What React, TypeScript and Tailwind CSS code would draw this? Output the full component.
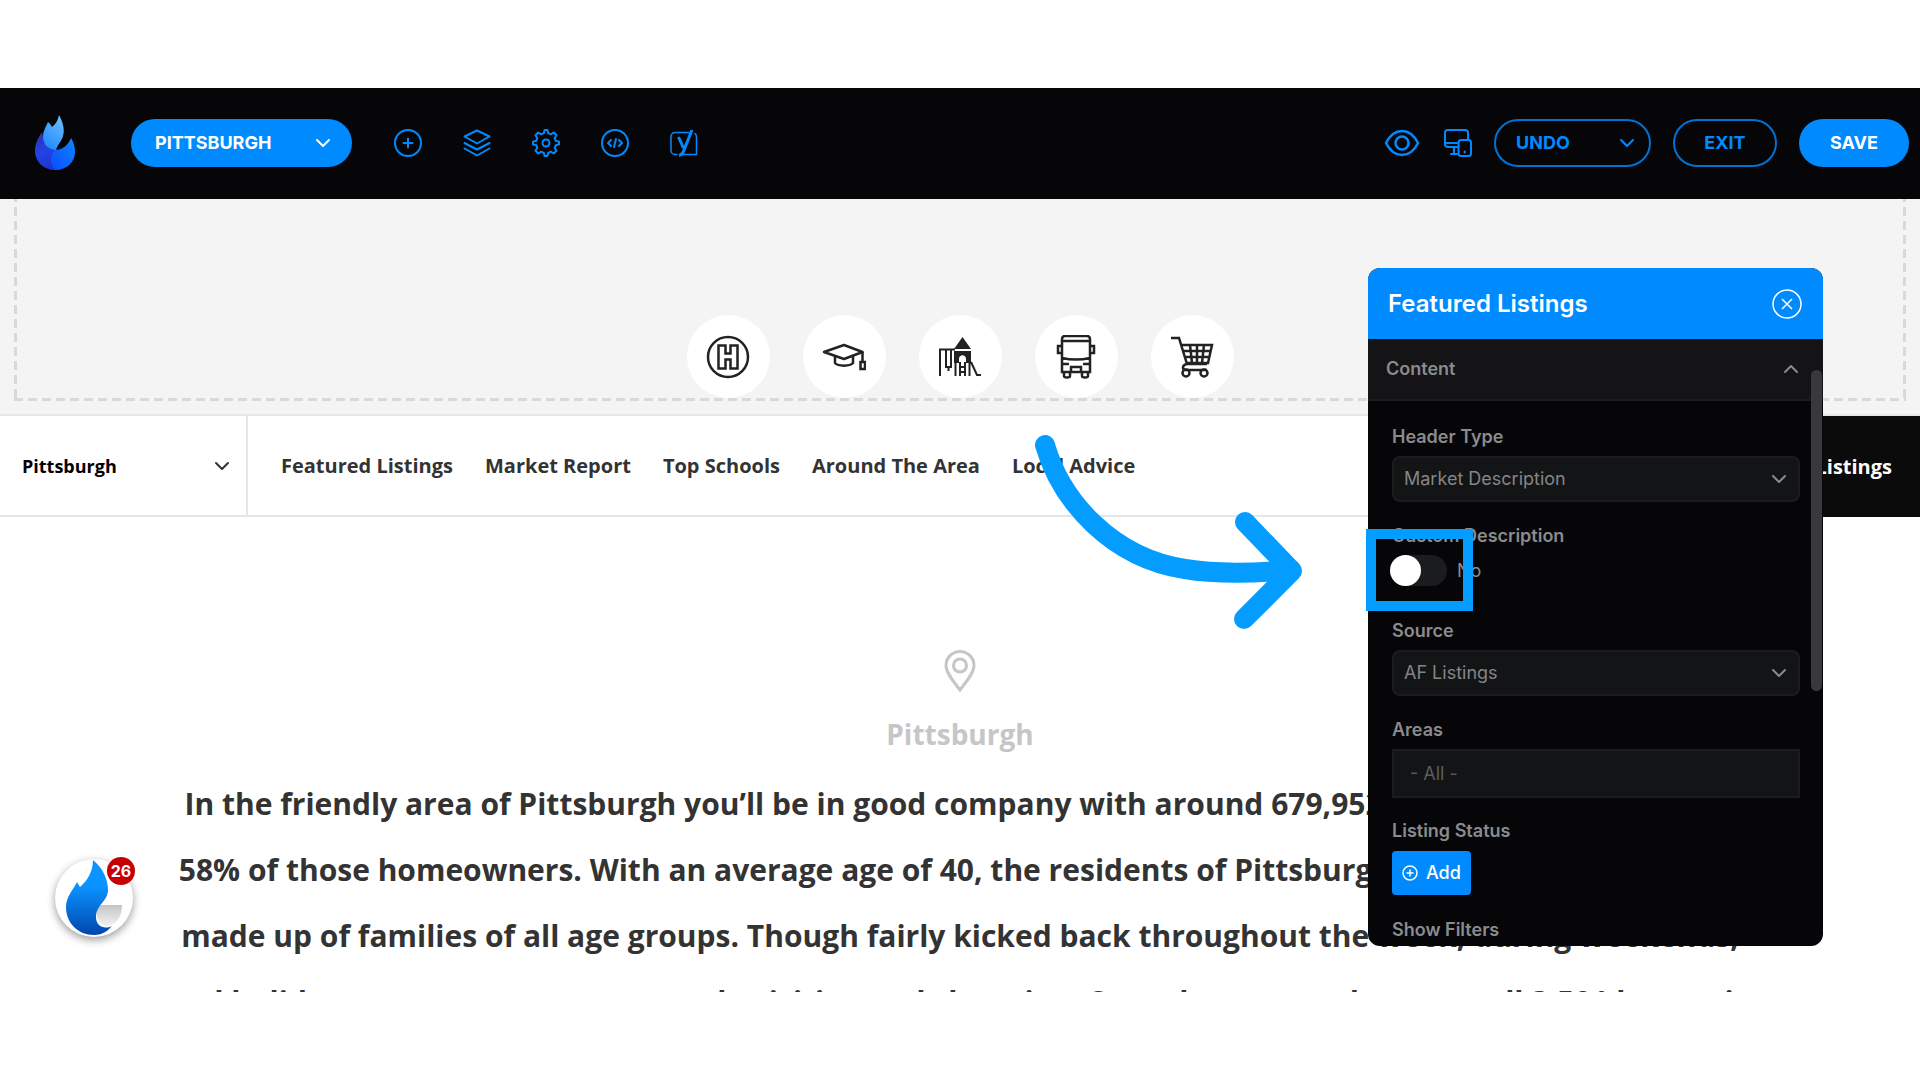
import { useState } from "react";
import type { ReactNode } from "react";

const NAV_LINKS = [
  "Featured Listings",
  "Market Report",
  "Top Schools",
  "Around The Area",
  "Local Advice",
];

const DESCRIPTION = [
  "In the friendly area of Pittsburgh you’ll be in good company with around 679,952 neighbors, and roughly",
  "58% of those homeowners. With an average age of 40, the residents of Pittsburgh are mostly well settled",
  "made up of families of all age groups. Though fairly kicked back throughout the week, during weekends,",
  "and holidays, you can see more people visiting and shopping. Come by any good season, all 3,501 homes in",
];

function Chevron({ className, up }: { className?: string; up?: boolean }) {
  return (
    <svg viewBox="0 0 16 10" fill="none" stroke="currentColor" strokeWidth="2" className={className}>
      <path d={up ? "M2 8l6-6 6 6" : "M2 2l6 6 6-6"} strokeLinecap="round" strokeLinejoin="round" />
    </svg>
  );
}

function FlameLogo() {
  return (
    <svg viewBox="0 0 40 56" className="h-14 w-10" aria-hidden="true">
      <defs>
        <linearGradient id="flameTop" x1="0.8" y1="0" x2="0.3" y2="1">
          <stop offset="0" stopColor="#6dbcff" />
          <stop offset="1" stopColor="#1f8bff" />
        </linearGradient>
        <linearGradient id="flameLeft" x1="0.2" y1="0" x2="0.5" y2="1">
          <stop offset="0" stopColor="#3a2fa8" />
          <stop offset="0.5" stopColor="#1f44e8" />
          <stop offset="1" stopColor="#2230c8" />
        </linearGradient>
        <linearGradient id="flameRight" x1="0" y1="1" x2="1" y2="0">
          <stop offset="0" stopColor="#0a4cff" />
          <stop offset="1" stopColor="#0f86ff" />
        </linearGradient>
      </defs>
      <path d="M7 17C3 23 0 29 0 36c0 11 9 19 20 19 6 0 10-2 13-6L21 34 9 28z" fill="url(#flameLeft)" />
      <path d="M36 23c3 5 4 9 4 14 0 10-8 18-20 18-6-6-5-17 1-20 8-1 12-5 15-12z" fill="url(#flameRight)" />
      <path d="M24 0c4 7 6 15 4 21-1 5-6 9-7 14C13 34 8 30 8 22c0-6 3-10 5-15 2 2 3 3 4 5 4-3 6-7 7-12z" fill="url(#flameTop)" />
    </svg>
  );
}

function ToolIcon({ label, children }: { label: string; children: ReactNode }) {
  return (
    <button type="button" aria-label={label} className="size-7 shrink-0">
      <svg viewBox="0 0 28 28" fill="none" stroke="currentColor" strokeWidth="2" strokeLinecap="round" strokeLinejoin="round" className="size-7">
        {children}
      </svg>
    </button>
  );
}

function TopBar() {
  return (
    <header className="flex h-[111px] items-center bg-[#060609] pr-[11px] pb-0.5 pl-[35px] font-['Inter',sans-serif] text-[#008aff]">
      <FlameLogo />
      <button type="button" className="ml-14 flex h-12 w-[221px] items-center justify-between rounded-full bg-[#008aff] pr-[21px] pl-6 text-lg font-bold text-white">
        PITTSBURGH
        <Chevron className="h-[10px] w-4" />
      </button>
      <nav aria-label="Editor tools" className="ml-[42px] flex items-center gap-[41px]">
        <ToolIcon label="Add">
          <circle cx="14" cy="14" r="13" />
          <path d="M14 9.500v9M9.500 14h9" />
        </ToolIcon>
        <ToolIcon label="Layers">
          <path d="M14 1.500l12.500 6L14 14.500l-12.500-7z" />
          <path d="M1.500 14L14 20.500 26.500 14M1.500 19.500L14 26.500l12.500-7" />
        </ToolIcon>
        <ToolIcon label="Settings">
          <circle cx="14" cy="14" r="3.500" />
          <path d="M11.800 4.200L12.600 1h2.800l.8 3.200 2.600 1.100 2.900-1.800 2.800 2.800-1.800 2.900 1.100 2.600 3.200.8v2.800l-3.200.8-1.100 2.600 1.800 2.900-2.800 2.800-2.900-1.800-2.600 1.100-.8 3.200h-2.800l-.8-3.200-2.600-1.100-2.900 1.800-2.800-2.800 1.800-2.900-1.100-2.600L1 15.400v-2.800l3.200-.8 1.100-2.600-1.800-2.900 2.800-2.800 2.900 1.800z" />
        </ToolIcon>
        <ToolIcon label="Code">
          <circle cx="14" cy="14" r="13" />
          <path d="M10 11l-3 3 3 3M18 11l3 3-3 3M15 10l-2 8" />
        </ToolIcon>
        <ToolIcon label="SEO">
          <path d="M19 3.500H5a4 4 0 0 0-4 4v14a4 4 0 0 0 4 4h2M25 4.500c1 1 1.500 2 1.500 3.500v17.500H13" strokeWidth="1.500" />
          <path d="M8.500 8l5 11M22 1l-8 20c-1 3-2.500 5-5 5.500" strokeWidth="3" strokeLinecap="butt" />
        </ToolIcon>
      </nav>
      <div className="ml-auto flex items-center">
        <button type="button" aria-label="Preview">
          <svg viewBox="0 0 36 28" fill="none" stroke="currentColor" strokeWidth="2.500" className="h-7 w-9">
            <path d="M2 14C6 6 11.500 2 18 2s12 4 16 12c-4 8-9.500 12-16 12S6 22 2 14z" strokeLinejoin="round" />
            <circle cx="18" cy="14" r="6.500" />
          </svg>
        </button>
        <button type="button" aria-label="Responsive view" className="ml-6">
          <svg viewBox="0 0 28 28" fill="none" stroke="currentColor" strokeWidth="2" strokeLinecap="round" strokeLinejoin="round" className="size-7">
            <path d="M13 18H4a3 3 0 0 1-3-3V4a3 3 0 0 1 3-3h17a3 3 0 0 1 3 3v6M1 14h12M10 18v6M7 25h6" />
            <rect x="14.500" y="11" width="12.500" height="16" rx="2.500" />
            <path d="M20.700 22.500v1" />
          </svg>
        </button>
        <button type="button" className="ml-[22px] flex h-12 w-[157px] items-center justify-between rounded-full border-2 border-[#0072d4] px-5 text-lg font-bold">
          UNDO
          <Chevron className="mr-[-6px] h-[10px] w-4" />
        </button>
        <button type="button" className="ml-[22px] h-12 w-[104px] rounded-full border-2 border-[#0072d4] text-lg font-bold">
          EXIT
        </button>
        <button type="button" className="ml-[22px] h-12 w-[110px] rounded-full bg-[#008aff] text-lg font-bold text-white">
          SAVE
        </button>
      </div>
    </header>
  );
}

function PlaceIcon({ label, children }: { label: string; children: ReactNode }) {
  return (
    <button type="button" aria-label={label} className="grid size-[83px] place-items-center rounded-full bg-white text-[#222]">
      <svg viewBox="0 0 44 44" fill="none" stroke="currentColor" strokeWidth="2.500" className="size-11">
        {children}
      </svg>
    </button>
  );
}

function PlacesStrip() {
  return (
    <section className="bg-[#f4f4f4] px-3.5 pb-[13px]">
      <div className="flex">
        <div className="w-[3px] bg-[repeating-linear-gradient(0deg,#d9d9d9_0_9px,transparent_9px_14px)]" />
        <div className="flex flex-1 justify-center gap-[33px] pt-[116px]">
          <PlaceIcon label="Hospitals">
            <circle cx="22" cy="22" r="20" />
            <path d="M12.500 10.500h7v8h5v-8h7v23h-7v-9h-5v9h-7z" />
          </PlaceIcon>
          <PlaceIcon label="Schools">
            <path d="M2 17l20-7 18.500 7L22 24z" strokeLinejoin="round" />
            <path d="M13 21v7c3 3.500 15 3.500 18 0v-7M40.500 17v10M38.500 27h4.500v7h-4.500z" />
          </PlaceIcon>
          <PlaceIcon label="Parks">
            <path d="M16 14l8.500-12L33 14z" fill="currentColor" stroke="none" />
            <path d="M16 16h17v12h-5v-4c0-5-7-5-7 0v4h-5z" fill="currentColor" stroke="none" />
            <path d="M2 41V14.500H17M8 15v17h5V15M10.500 32v4" strokeWidth="2" />
            <path d="M17.500 27v14M22 27v14M27 27v14M31.500 27v14M22 32h5M22 37h5M33 27l6 13h4" strokeWidth="2" />
          </PlaceIcon>
          <PlaceIcon label="Transit">
            <path d="M8 37V4c0-2 1-3 3-3h22c2 0 3 1 3 3v33zM8 6h28M8 23c9 2 19 2 28 0M8 11H4v7h4M36 11h4v7h-4M9 29h6M29 29h6M17 37v-5h10v5M10 37v4c0 2 6 2 6 0v-4M28 37v4c0 2 6 2 6 0v-4" />
          </PlaceIcon>
          <PlaceIcon label="Shopping">
            <path d="M1 3h8l8 26h20M11 10h31l-4 18H17M12 16h28M15 22h24M20 10l2 18M27 10v18M34 10l-2 18M17 29c-5 1-5 5-2 6h22" />
            <circle cx="16" cy="38" r="3.500" />
            <circle cx="34" cy="38" r="3.500" />
          </PlaceIcon>
        </div>
        <div className="w-[3px] bg-[repeating-linear-gradient(0deg,#d9d9d9_0_9px,transparent_9px_14px)]" />
      </div>
      <div className="h-[3px] bg-[repeating-linear-gradient(90deg,#d9d9d9_0_9px,transparent_9px_14px)]" />
    </section>
  );
}

function AreaNav() {
  return (
    <div className="flex h-[103px] items-stretch border-y-2 border-[#e6e6e6] bg-white font-['Open_Sans',sans-serif] text-xl font-bold">
      <button type="button" className="flex w-[248px] items-center justify-between border-r-2 border-[#e6e6e6] pr-4 pl-[22px] text-lg text-black">
        Pittsburgh
        <Chevron className="h-[10px] w-4 text-[#333]" />
      </button>
      <nav aria-label="Area sections" className="flex items-center gap-8 pl-[33px] text-[#333]">
        {NAV_LINKS.map((link) => (
          <a key={link} href="#">
            {link}
          </a>
        ))}
      </nav>
      <a href="#" className="-mb-0.5 ml-auto flex items-center bg-[#0b0b0b] pr-7 pl-8 text-white">
        View All Listings
      </a>
    </div>
  );
}

function AreaDescription() {
  return (
    <section className="flex h-[475px] flex-col items-center overflow-hidden pt-[133px] font-['Open_Sans',sans-serif] font-bold">
      <svg viewBox="0 0 32 42" fill="none" stroke="#c6c6c6" strokeWidth="3" className="h-[42px] w-8 shrink-0">
        <path d="M16 40C10 32 2 23 2 15.500a14 14 0 0 1 28 0C30 23 22 32 16 40z" />
        <circle cx="16" cy="15.500" r="6.500" />
      </svg>
      <h1 className="mt-6 text-[28px] leading-9 text-[#c6c6c6]">Pittsburgh</h1>
      <p className="mt-[19px] text-center text-[30px] leading-[66px] whitespace-nowrap text-[#333]">
        {DESCRIPTION.map((line) => (
          <span key={line} className="block">
            {line}
          </span>
        ))}
      </p>
    </section>
  );
}

function SelectField({ id, label, value }: { id: string; label: string; value: string }) {
  return (
    <div>
      <label htmlFor={id} className="block leading-6 font-semibold">
        {label}
      </label>
      <div className="relative mt-[7px]">
        <select id={id} defaultValue={value} className="h-[46px] w-full appearance-none rounded-lg border-2 border-[#1b1c1e] bg-[#131415] px-2.5 text-[#858587]">
          <option>{value}</option>
        </select>
        <Chevron className="pointer-events-none absolute top-[18px] right-[13px] h-[10px] w-4" />
      </div>
    </div>
  );
}

function SettingsPanel() {
  const [custom, setCustom] = useState(false);

  return (
    <aside className="absolute top-[268px] right-[97px] h-[678px] w-[455px] overflow-hidden rounded-xl bg-[#060609] font-['Inter',sans-serif] text-lg text-[#8b8b8e]">
      <div className="flex h-[71px] items-center justify-between bg-[#008aff] pr-[21px] pl-5 text-white">
        <h2 className="text-2xl font-semibold">Featured Listings</h2>
        <button type="button" aria-label="Close">
          <svg viewBox="0 0 30 30" fill="none" stroke="currentColor" strokeWidth="1.500" className="size-[30px]">
            <circle cx="15" cy="15" r="14" />
            <path d="M10 10l10 10M20 10L10 20" />
          </svg>
        </button>
      </div>
      <button type="button" className="flex h-[62px] w-full items-center justify-between border-b-2 border-[#1b1c1e] bg-[#141416] pr-6 pl-[18px] font-semibold">
        Content
        <Chevron up className="h-[10px] w-4" />
      </button>
      <form className="pt-6 pr-[23px] pl-6">
        <SelectField id="header-type" label="Header Type" value="Market Description" />
        <div className="mt-[22px]">
          <label htmlFor="custom-description" className="block leading-6 font-semibold">
            Custom Description
          </label>
          <div className="mt-[7px] flex items-center gap-2.5">
            <input
              id="custom-description"
              type="checkbox"
              role="switch"
              checked={custom}
              onChange={(e) => setCustom(e.target.checked)}
              className="-ml-0.5 h-[31px] w-[57px] appearance-none rounded-full bg-[#1b1c1e] before:block before:size-[31px] before:rounded-full before:bg-white checked:bg-[#008aff] checked:before:translate-x-[26px]"
            />
            <span>{custom ? "Yes" : "No"}</span>
          </div>
        </div>
        <div className="mt-[33px]">
          <SelectField id="source" label="Source" value="AF Listings" />
        </div>
        <div className="mt-[22px]">
          <label htmlFor="areas" className="block leading-6 font-semibold">
            Areas
          </label>
          <input id="areas" type="text" placeholder="- All -" className="mt-[7px] block h-[49px] w-full border-2 border-[#1b1c1e] bg-[#131415] px-4 placeholder:text-[#5c5c5e]" />
        </div>
        <div className="mt-[21px]">
          <p className="leading-6 font-semibold">Listing Status</p>
          <button type="button" className="mt-2 flex h-11 items-center gap-2 rounded bg-[#008aff] px-2.5 font-medium text-white">
            <svg viewBox="0 0 16 16" fill="none" stroke="currentColor" strokeWidth="1.500" className="size-4">
              <circle cx="8" cy="8" r="7" />
              <path d="M8 4.500v7M4.500 8h7" />
            </svg>
            Add
          </button>
        </div>
        <p className="mt-[23px] leading-6 font-semibold">Show Filters</p>
      </form>
      <div className="absolute top-[102px] right-px h-[321px] w-[11px] rounded-full bg-[#39393b]" />
    </aside>
  );
}

function ChatBubble() {
  return (
    <button type="button" aria-label="Open chat" className="absolute top-[859px] left-[55px] size-[78px] rounded-full bg-white shadow-[0_3px_9px_rgba(0,0,0,0.4)]">
      <svg viewBox="0 0 78 78" className="size-[78px]">
        <defs>
          <linearGradient id="bubbleFlame" x1="0" y1="0" x2="0" y2="1">
            <stop offset="0.35" stopColor="#0b93ff" />
            <stop offset="1" stopColor="#0046ad" />
          </linearGradient>
          <linearGradient id="bubbleTail" x1="0" y1="0" x2="0" y2="1">
            <stop offset="0" stopColor="#c4c4c4" />
            <stop offset="1" stopColor="#f2f2f2" />
          </linearGradient>
        </defs>
        <path d="M42 46h25c0 12-6 19-13 21-10 1-15-12-12-21z" fill="url(#bubbleTail)" />
        <path d="M38 1c10 8 15 20 15 30 0 11-12 15-12 27 0 9 8 13 16 9-5 6-11 9-18 9-16 0-28-12-28-28 0-10 7-17 11-25l3 5c8-7 13-16 13-27z" fill="url(#bubbleFlame)" />
      </svg>
      <span className="absolute -top-0.5 right-[-2px] grid size-7 place-items-center rounded-full bg-[#c60000] font-['Inter',sans-serif] text-base font-bold text-white">
        26
      </span>
    </button>
  );
}

export default function App() {
  return (
    <div className="relative min-h-screen overflow-hidden bg-white pt-[88px]">
      <TopBar />
      <PlacesStrip />
      <AreaNav />
      <AreaDescription />
      <ChatBubble />
      <SettingsPanel />

      {/* callout pointing at the custom description switch */}
      <div className="pointer-events-none absolute top-[529px] right-[447px] h-[82px] w-[107px] border-[10px] border-[#049dff]" />
      <svg viewBox="0 0 270 200" fill="none" stroke="#049dff" strokeWidth="20" strokeLinecap="round" strokeLinejoin="round" className="pointer-events-none absolute top-[434px] right-[615px] h-[200px] w-[270px]">
        <path d="M10 11C26 67 77 124 150 135c30 5 72 4 106 1" />
        <path d="M210 88l47 49-48 48" />
      </svg>
    </div>
  );
}
